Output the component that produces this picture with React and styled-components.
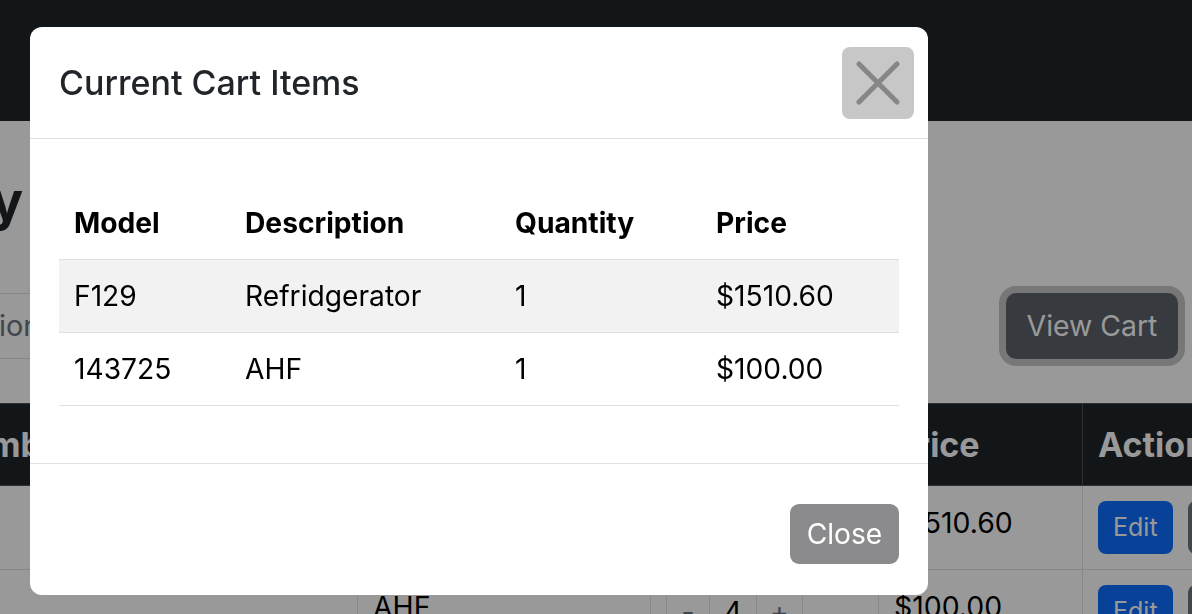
import React from 'react';
import styled, { createGlobalStyle } from 'styled-components';

const GlobalStyle = createGlobalStyle`
  html, body {
    margin: 0;
    padding: 0;
  }
  body {
    width: 1192px;
    height: 614px;
    overflow: hidden;
    background: #fff;
    color: #212529;
    font-family: Inter, "Noto Sans", sans-serif;
  }
`;

const Navbar = styled.nav`
  height: 121px;
  background: #212529;
`;

// the page behind the modal is scrolled sideways
const Main = styled.main`
  margin-left: -225px;
  padding-right: 14px;
`;

const PageTitle = styled.h1`
  margin: 49px 0 0;
  font-size: 53px;
  font-weight: 700;
  line-height: 1.2;
`;

const FilterRow = styled.div`
  display: flex;
  align-items: center;
  gap: 126px;
  margin-top: 59px;
`;

const SearchInput = styled.input`
  flex: 1;
  box-sizing: border-box;
  height: 66px;
  padding: 0 13px 0 8px;
  border: 1px solid #dee2e6;
  border-radius: 10px;
  font-family: inherit;
  font-size: 28.8px;
  color: #212529;
  &::placeholder {
    color: #6c757d;
  }
`;

const ViewCartButton = styled.button`
  width: 172px;
  height: 66px;
  border: none;
  border-radius: 10px;
  background: #5d6168;
  color: #fff;
  font-family: inherit;
  font-size: 28.4px;
  box-shadow: 0 0 0 7px #c6c7c8;
`;

const InventoryTable = styled.table`
  margin-top: 44px;
  border-collapse: collapse;
  table-layout: fixed;
  width: 1625px;
  font-size: 28.4px;
  color: #000;
  th {
    background: #212529;
    color: #fff;
    border: 1px solid #4d5154;
    font-size: 34px;
    font-weight: 700;
    line-height: 51px;
    padding: 15px;
    text-align: left;
  }
  td {
    border: 1px solid #dee2e6;
    padding: 15px;
    line-height: 43px;
    vertical-align: top;
    white-space: nowrap;
  }
`;

const QtyGroup = styled.div`
  display: inline-flex;
  border: 1px solid #dee2e6;
  border-radius: 8px;
  height: 51px;
  line-height: 51px;
`;

const QtyPart = styled.span`
  width: ${({ w }) => w}px;
  text-align: center;
  color: ${({ muted }) => (muted ? '#6c757d' : '#000')};
  & + & {
    border-left: 1px solid #dee2e6;
  }
`;

const ActionCell = styled.div`
  display: flex;
  gap: 15px;
`;

const SmallButton = styled.button`
  height: 53px;
  padding: 0 15px;
  border: none;
  border-radius: 8px;
  background: ${({ variant }) => (variant === 'primary' ? '#0d6efd' : '#6c757d')};
  color: #fff;
  font-family: inherit;
  font-size: 25px;
`;

const Backdrop = styled.div`
  position: fixed;
  inset: 0;
  display: flex;
  align-items: flex-start;
  padding: 27px 0 0 30px;
  background: rgba(0, 0, 0, 0.4);
`;

const Dialog = styled.div`
  width: 898px;
  background: #fff;
  border-radius: 12px;
  overflow: hidden;
`;

const DialogHeader = styled.div`
  display: flex;
  align-items: center;
  justify-content: space-between;
  height: 111px;
  padding: 0 14px 0 29px;
  border-bottom: 1px solid #dee2e6;
`;

const DialogTitle = styled.h5`
  margin: 2px 0 0;
  font-size: 34px;
  font-weight: 500;
  line-height: 1.2;
  color: #212529;
`;

const IconButton = styled.button`
  display: flex;
  align-items: center;
  justify-content: center;
  width: 72px;
  height: 72px;
  padding: 0;
  border: none;
  border-radius: 8px;
  background: #c7c7c7;
`;

const DialogBody = styled.div`
  padding: 48px 29px 29px;
`;

const CartTable = styled.table`
  width: 100%;
  margin-bottom: 28px;
  border-collapse: collapse;
  table-layout: fixed;
  font-size: 28.2px;
  color: #000;
  th,
  td {
    padding: 15px;
    line-height: 42px;
    text-align: left;
    border-bottom: 1px solid #dee2e6;
  }
  th {
    font-weight: 700;
  }
  tbody tr:nth-child(odd) td {
    background: #f2f2f2;
  }
`;

const DialogFooter = styled.div`
  display: flex;
  justify-content: flex-end;
  padding: 40px 29px 31px;
  border-top: 1px solid #dee2e6;
`;

const CloseButton = styled.button`
  width: 109px;
  height: 60px;
  border: none;
  border-radius: 9px;
  background: #8b8b8d;
  color: #fff;
  font-family: inherit;
  font-size: 28.2px;
`;

const inventory = [
  { id: 1, model: 'F129', description: 'Refridgerator', qty: 1, price: '$1510.60' },
  { id: 2, model: '143725', description: 'AHF', qty: 4, price: '$100.00' },
];

const cart = [
  { model: 'F129', description: 'Refridgerator', qty: 1, price: '$1510.60' },
  { model: '143725', description: 'AHF', qty: 1, price: '$100.00' },
];

const App = () => (
  <>
    <GlobalStyle />
    <Navbar />
    <Main>
      <PageTitle>Inventory</PageTitle>
      <FilterRow>
        <SearchInput placeholder="Search description" readOnly />
        <ViewCartButton type="button">View Cart</ViewCartButton>
      </FilterRow>
      <InventoryTable>
        <colgroup>
          <col style={{ width: 40 }} />
          <col style={{ width: 542 }} />
          <col style={{ width: 293 }} />
          <col style={{ width: 228 }} />
          <col style={{ width: 204 }} />
          <col style={{ width: 318 }} />
        </colgroup>
        <thead>
          <tr>
            <th>#</th>
            <th>Model Number</th>
            <th>Description</th>
            <th>Quantity</th>
            <th>Price</th>
            <th>Actions</th>
          </tr>
        </thead>
        <tbody>
          {inventory.map((item) => (
            <tr key={item.id}>
              <td>{item.id}</td>
              <td>{item.model}</td>
              <td>{item.description}</td>
              <td>
                <QtyGroup>
                  <QtyPart w={42} muted>-</QtyPart>
                  <QtyPart w={46}>{item.qty}</QtyPart>
                  <QtyPart w={45} muted>+</QtyPart>
                </QtyGroup>
              </td>
              <td>{item.price}</td>
              <td>
                <ActionCell>
                  <SmallButton variant="primary">Edit</SmallButton>
                  <SmallButton>Delete</SmallButton>
                </ActionCell>
              </td>
            </tr>
          ))}
        </tbody>
      </InventoryTable>
    </Main>

    <Backdrop>
      <Dialog>
        <DialogHeader>
          <DialogTitle>Current Cart Items</DialogTitle>
          <IconButton type="button" aria-label="Close">
            <svg width="44" height="44" viewBox="0 0 44 44">
              <path
                d="M3 3 L41 41 M41 3 L3 41"
                stroke="#868686"
                strokeWidth="5"
                strokeLinecap="round"
                fill="none"
              />
            </svg>
          </IconButton>
        </DialogHeader>
        <DialogBody>
          <CartTable>
            <colgroup>
              <col style={{ width: 171 }} />
              <col style={{ width: 270 }} />
              <col style={{ width: 201 }} />
              <col style={{ width: 198 }} />
            </colgroup>
            <thead>
              <tr>
                <th>Model</th>
                <th>Description</th>
                <th>Quantity</th>
                <th>Price</th>
              </tr>
            </thead>
            <tbody>
              {cart.map((item) => (
                <tr key={item.model}>
                  <td>{item.model}</td>
                  <td>{item.description}</td>
                  <td>{item.qty}</td>
                  <td>{item.price}</td>
                </tr>
              ))}
            </tbody>
          </CartTable>
        </DialogBody>
        <DialogFooter>
          <CloseButton type="button">Close</CloseButton>
        </DialogFooter>
      </Dialog>
    </Backdrop>
  </>
);

export default App;
